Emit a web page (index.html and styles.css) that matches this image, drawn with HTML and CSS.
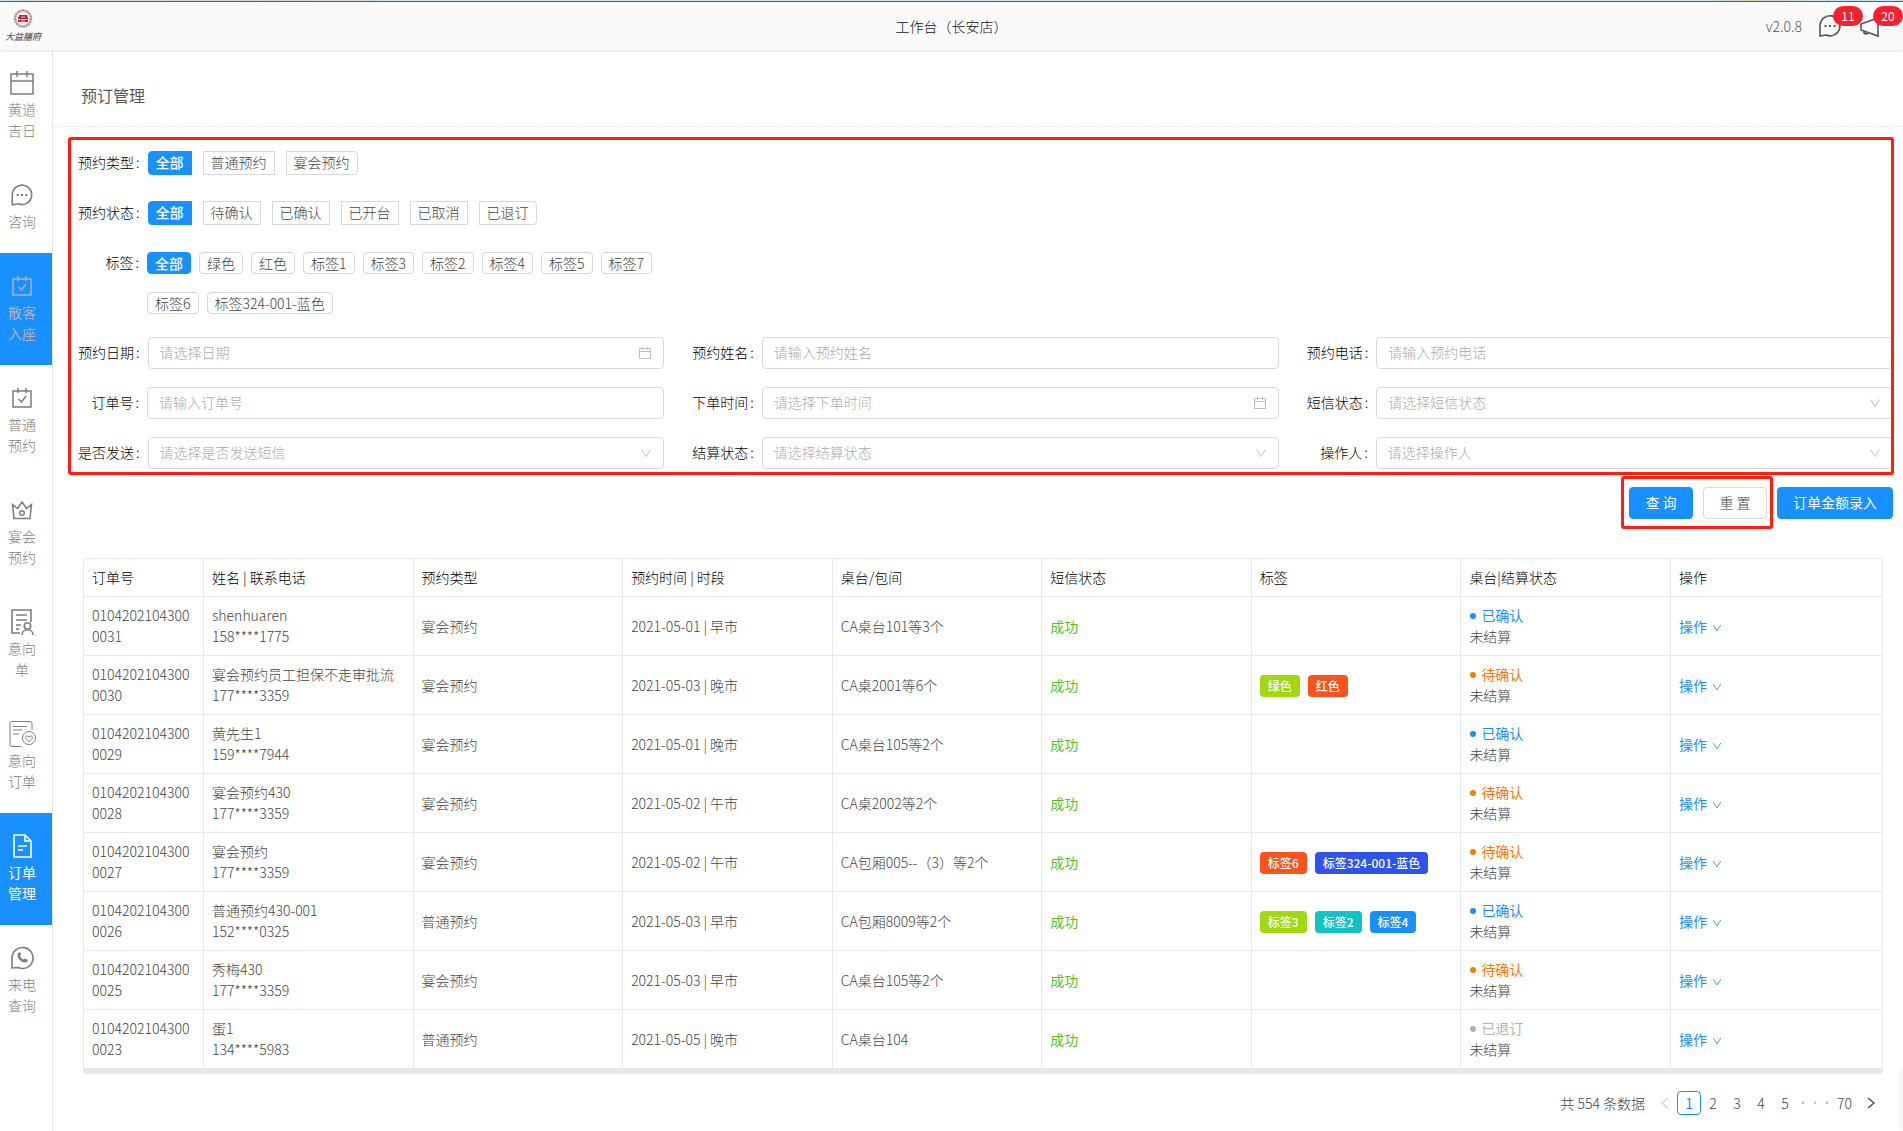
FILE: index.html
```html
<!DOCTYPE html>
<html lang="zh-CN">
<head>
    <meta charset="utf-8">
    <title>预订管理</title>
    <link rel="stylesheet" href="styles.css">
</head>
<body>
    <!-- shared icons -->
    <svg class="sprite" aria-hidden="true">
        <symbol id="i-down" viewBox="0 0 12 12"><path d="M1.5 2.5 6 9.5l4.500-7" fill="none" stroke="currentColor"/></symbol>
        <symbol id="i-date" viewBox="0 0 14 14"><path d="M1.500 2.500h11v10h-11zM1.500 5.500h11M4.500 1v3M9.500 1v3" fill="none" stroke="currentColor"/></symbol>
        <symbol id="i-check" viewBox="0 0 24 24"><path d="M3 5h18v16H3zM8 2v5M16 2v5M8.500 13l3 3 4.500-6" fill="none" stroke="currentColor" stroke-width="1.500"/></symbol>
        <symbol id="i-chat" viewBox="0 0 24 24"><path d="M2 22V12a10 10 0 1 1 6 9z" fill="none" stroke="currentColor" stroke-width="1.600"/><path d="M6.500 11h2v2h-2zM11 11h2v2h-2zM15.500 11h2v2h-2z" fill="currentColor"/></symbol>
    </svg>

    <div class="top-strip"></div>
    <header class="header">
        <a class="logo" href="#">
            <svg width="20" height="21" viewBox="0 0 20 21">
                <circle cx="10" cy="10.500" r="8" fill="#f6f1ee" stroke="#a8958b" stroke-width="2.500" stroke-dasharray="2 .6"/>
                <path d="M6 7h8v2h1v2H5V9h1zM5 12h10v2H5z" fill="#c8202f"/>
                <path d="M8 9h4M7 11.500h6M8 13h4" stroke="#fff" stroke-width=".7"/>
            </svg>
            <span class="logo-name">大益膳府</span>
        </a>
        <div class="header-title">工作台（长安店）</div>
        <div class="header-right">
            <span class="version">v2.0.8</span>
            <button class="notice" type="button" aria-label="消息">
                <svg width="24" height="24"><use href="#i-chat"/></svg>
                <span class="badge">11</span>
            </button>
            <button class="notice" type="button" aria-label="公告">
                <svg width="24" height="24" viewBox="0 0 24 24" fill="none" stroke="currentColor" stroke-width="1.600"><path d="M3 10v6l17 6V4L3 10zM6 17a2 2 0 1 0 4 1.500"/></svg>
                <span class="badge">20</span>
            </button>
        </div>
    </header>

    <div class="layout">
        <nav class="sidebar">
            <a href="#">
                <svg width="28" height="28" viewBox="0 0 28 28" fill="none" stroke="currentColor" stroke-width="1.500"><path d="M3 5h22v20H3zM3 12h22M9 2v6M19 2v6"/></svg>
                黄道吉日
            </a>
            <a href="#">
                <svg width="28" height="28" viewBox="0 0 24 24"><use href="#i-chat" x="2" y="2" width="20" height="20"/></svg>
                咨询
            </a>
            <a class="active dim" href="#">
                <svg width="28" height="28" viewBox="-2 -2 28 28"><use href="#i-check" width="24" height="24"/></svg>
                散客入座
            </a>
            <a href="#">
                <svg width="28" height="28" viewBox="-2 -2 28 28"><use href="#i-check" width="24" height="24"/></svg>
                普通预约
            </a>
            <a href="#">
                <svg width="28" height="28" viewBox="0 0 28 28" fill="none" stroke="currentColor" stroke-width="1.500"><path d="M4.500 8.500l5 4L14 6l4.500 6.500 5-4L22 22.500H6z"/><circle cx="14" cy="17" r="2.300"/></svg>
                宴会预约
            </a>
            <a href="#">
                <svg width="28" height="28" viewBox="0 0 28 28" fill="none" stroke="currentColor" stroke-width="1.600"><path d="M12 25H4V2h19v12M8 7h11M8 12h11M8 17h5M8 21h3"/><circle cx="19.500" cy="18" r="3.200"/><path d="M14 27c0-7 11-7 11 0"/></svg>
                意向单
            </a>
            <a href="#">
                <svg width="28" height="28" viewBox="0 0 28 28" fill="none" stroke="currentColor"><path d="M13 26.500H4a2 2 0 0 1-2-2v-21a2 2 0 0 1 2-2h18a2 2 0 0 1 2 2V10M5 6.500h14M5 10h9M5 14h6"/><circle cx="21" cy="18" r="6.500"/><path d="M21 21.500c-6-4-3-7 0-4.500 3-2.500 6 .5 0 4.500z"/></svg>
                意向订单
            </a>
            <a class="active" href="#">
                <svg width="28" height="28" viewBox="0 0 28 28" fill="none" stroke="currentColor" stroke-width="1.600"><path d="M6 3h11l6 6v16H6zM17 3v6h6M10 14h9M10 18h5"/></svg>
                订单管理
            </a>
            <a href="#">
                <svg width="28" height="28" viewBox="0 0 28 28" fill="none" stroke="currentColor" stroke-width="1.600"><path d="M4 24V14a10.500 10.500 0 1 1 6 9.500z"/><path d="M10 9c-2 5 4 11 9 9l1-2-3-1.500-1.500 1c-1.500-.5-3-2-3.500-3.500l1-1.500L12 8z" fill="currentColor" stroke="none"/></svg>
                来电查询
            </a>
        </nav>

        <main class="main">
            <h1 class="page-title">预订管理</h1>

            <form>
                <div class="filters">
                    <div class="field start" role="radiogroup" aria-labelledby="l-type">
                        <span class="label" id="l-type">预约类型</span>
                        <div class="options">
                            <label><input type="radio" name="type" checked><span>全部</span></label>
                            <label><input type="radio" name="type"><span>普通预约</span></label>
                            <label><input type="radio" name="type"><span>宴会预约</span></label>
                        </div>
                    </div>
                    <div class="field start" role="radiogroup" aria-labelledby="l-status">
                        <span class="label" id="l-status">预约状态</span>
                        <div class="options">
                            <label><input type="radio" name="status" checked><span>全部</span></label>
                            <label><input type="radio" name="status"><span>待确认</span></label>
                            <label><input type="radio" name="status"><span>已确认</span></label>
                            <label><input type="radio" name="status"><span>已开台</span></label>
                            <label><input type="radio" name="status"><span>已取消</span></label>
                            <label><input type="radio" name="status"><span>已退订</span></label>
                        </div>
                    </div>
                    <div class="field start" role="group" aria-labelledby="l-tag">
                        <span class="label" id="l-tag">标签</span>
                        <div class="options tags">
                            <label><input type="checkbox" checked><span>全部</span></label>
                            <label><input type="checkbox"><span>绿色</span></label>
                            <label><input type="checkbox"><span>红色</span></label>
                            <label><input type="checkbox"><span>标签1</span></label>
                            <label><input type="checkbox"><span>标签3</span></label>
                            <label><input type="checkbox"><span>标签2</span></label>
                            <label><input type="checkbox"><span>标签4</span></label>
                            <label><input type="checkbox"><span>标签5</span></label>
                            <label><input type="checkbox"><span>标签7</span></label>
                            <label><input type="checkbox"><span>标签6</span></label>
                            <label><input type="checkbox"><span>标签324-001-蓝色</span></label>
                        </div>
                    </div>

                    <div class="field start">
                        <label class="label" for="date">预约日期</label>
                        <div class="control"><input id="date" type="text" placeholder="请选择日期"><svg width="14" height="14"><use href="#i-date"/></svg></div>
                    </div>
                    <div class="field">
                        <label class="label" for="name">预约姓名</label>
                        <div class="control"><input id="name" type="text" placeholder="请输入预约姓名"></div>
                    </div>
                    <div class="field">
                        <label class="label" for="phone">预约电话</label>
                        <div class="control"><input id="phone" type="text" placeholder="请输入预约电话"></div>
                    </div>
                    <div class="field">
                        <label class="label" for="orderNo">订单号</label>
                        <div class="control"><input id="orderNo" type="text" placeholder="请输入订单号"></div>
                    </div>
                    <div class="field">
                        <label class="label" for="orderTime">下单时间</label>
                        <div class="control"><input id="orderTime" type="text" placeholder="请选择下单时间"><svg width="14" height="14"><use href="#i-date"/></svg></div>
                    </div>
                    <div class="field">
                        <label class="label" for="sms">短信状态</label>
                        <div class="control"><select id="sms"><option>请选择短信状态</option></select><svg width="12" height="12"><use href="#i-down"/></svg></div>
                    </div>
                    <div class="field">
                        <label class="label" for="sent">是否发送</label>
                        <div class="control"><select id="sent"><option>请选择是否发送短信</option></select><svg width="12" height="12"><use href="#i-down"/></svg></div>
                    </div>
                    <div class="field">
                        <label class="label" for="settle">结算状态</label>
                        <div class="control"><select id="settle"><option>请选择结算状态</option></select><svg width="12" height="12"><use href="#i-down"/></svg></div>
                    </div>
                    <div class="field">
                        <label class="label" for="operator">操作人</label>
                        <div class="control"><select id="operator"><option>请选择操作人</option></select><svg width="12" height="12"><use href="#i-down"/></svg></div>
                    </div>
                </div>

                <div class="actions">
                    <div class="marked">
                        <button class="btn primary" type="submit">查 询</button>
                        <button class="btn" type="reset">重 置</button>
                    </div>
                    <button class="btn primary" type="button">订单金额录入</button>
                </div>
            </form>

            <div class="table-wrap">
                <table>
                    <thead>
                        <tr>
                            <th class="col-no">订单号</th>
                            <th>姓名 | 联系电话</th>
                            <th>预约类型</th>
                            <th>预约时间 | 时段</th>
                            <th>桌台/包间</th>
                            <th>短信状态</th>
                            <th>标签</th>
                            <th>桌台|结算状态</th>
                            <th class="col-action">操作</th>
                        </tr>
                    </thead>
                    <tbody>
                        <tr>
                            <td>01042021043000031</td>
                            <td>shenhuaren<br>158****1775</td>
                            <td>宴会预约</td>
                            <td>2021-05-01 | 早市</td>
                            <td>CA桌台101等3个</td>
                            <td class="ok">成功</td>
                            <td></td>
                            <td><span class="state confirmed">已确认</span>未结算</td>
                            <td><a href="#">操作<svg width="10" height="10"><use href="#i-down"/></svg></a></td>
                        </tr>
                        <tr>
                            <td>01042021043000030</td>
                            <td>宴会预约员工担保不走审批流<br>177****3359</td>
                            <td>宴会预约</td>
                            <td>2021-05-03 | 晚市</td>
                            <td>CA桌2001等6个</td>
                            <td class="ok">成功</td>
                            <td><span class="tag lime">绿色</span><span class="tag red">红色</span></td>
                            <td><span class="state pending">待确认</span>未结算</td>
                            <td><a href="#">操作<svg width="10" height="10"><use href="#i-down"/></svg></a></td>
                        </tr>
                        <tr>
                            <td>01042021043000029</td>
                            <td>黄先生1<br>159****7944</td>
                            <td>宴会预约</td>
                            <td>2021-05-01 | 晚市</td>
                            <td>CA桌台105等2个</td>
                            <td class="ok">成功</td>
                            <td></td>
                            <td><span class="state confirmed">已确认</span>未结算</td>
                            <td><a href="#">操作<svg width="10" height="10"><use href="#i-down"/></svg></a></td>
                        </tr>
                        <tr>
                            <td>01042021043000028</td>
                            <td>宴会预约430<br>177****3359</td>
                            <td>宴会预约</td>
                            <td>2021-05-02 | 午市</td>
                            <td>CA桌2002等2个</td>
                            <td class="ok">成功</td>
                            <td></td>
                            <td><span class="state pending">待确认</span>未结算</td>
                            <td><a href="#">操作<svg width="10" height="10"><use href="#i-down"/></svg></a></td>
                        </tr>
                        <tr>
                            <td>01042021043000027</td>
                            <td>宴会预约<br>177****3359</td>
                            <td>宴会预约</td>
                            <td>2021-05-02 | 午市</td>
                            <td>CA包厢005--（3）等2个</td>
                            <td class="ok">成功</td>
                            <td><span class="tag red">标签6</span><span class="tag geek">标签324-001-蓝色</span></td>
                            <td><span class="state pending">待确认</span>未结算</td>
                            <td><a href="#">操作<svg width="10" height="10"><use href="#i-down"/></svg></a></td>
                        </tr>
                        <tr>
                            <td>01042021043000026</td>
                            <td>普通预约430-001<br>152****0325</td>
                            <td>普通预约</td>
                            <td>2021-05-03 | 早市</td>
                            <td>CA包厢8009等2个</td>
                            <td class="ok">成功</td>
                            <td><span class="tag lime">标签3</span><span class="tag cyan">标签2</span><span class="tag blue">标签4</span></td>
                            <td><span class="state confirmed">已确认</span>未结算</td>
                            <td><a href="#">操作<svg width="10" height="10"><use href="#i-down"/></svg></a></td>
                        </tr>
                        <tr>
                            <td>01042021043000025</td>
                            <td>秀梅430<br>177****3359</td>
                            <td>宴会预约</td>
                            <td>2021-05-03 | 早市</td>
                            <td>CA桌台105等2个</td>
                            <td class="ok">成功</td>
                            <td></td>
                            <td><span class="state pending">待确认</span>未结算</td>
                            <td><a href="#">操作<svg width="10" height="10"><use href="#i-down"/></svg></a></td>
                        </tr>
                        <tr>
                            <td>01042021043000023</td>
                            <td>蛋1<br>134****5983</td>
                            <td>普通预约</td>
                            <td>2021-05-05 | 晚市</td>
                            <td>CA桌台104</td>
                            <td class="ok">成功</td>
                            <td></td>
                            <td><span class="state refunded">已退订</span>未结算</td>
                            <td><a href="#">操作<svg width="10" height="10"><use href="#i-down"/></svg></a></td>
                        </tr>
                    </tbody>
                </table>
            </div>

            <nav class="pager">
                <span class="total">共 554 条数据</span>
                <a class="prev" href="#" aria-label="上一页"><svg width="12" height="12" viewBox="0 0 12 12"><path d="M9 1 3 6l6 5" fill="none" stroke="currentColor"/></svg></a>
                <a class="current" href="#">1</a>
                <a href="#">2</a>
                <a href="#">3</a>
                <a href="#">4</a>
                <a href="#">5</a>
                <span class="jump">•••</span>
                <a href="#">70</a>
                <a href="#" aria-label="下一页"><svg width="12" height="12" viewBox="0 0 12 12"><path d="M3 1l6 5-6 5" fill="none" stroke="currentColor" stroke-width="1.300"/></svg></a>
            </nav>
        </main>
    </div>
    <div class="side-tab"></div>
</body>
</html>
```
FILE: styles.css
```css
* {
    box-sizing: border-box;
}
body {
    margin: 0;
    min-height: 100vh;
    display: flex;
    flex-direction: column;
    font-family: "Noto Sans CJK SC", sans-serif;
    font-size: 14px;
    font-weight: 300;
    line-height: 21px;
    color: #444;
    background: #fff;
}
a {
    color: #1890ff;
    text-decoration: none;
}
button, input, select {
    font: inherit;
}
.sprite {
    position: absolute;
    width: 0;
    height: 0;
}

/* header */
.top-strip {
    height: 1px;
    background: linear-gradient(90deg, #cfe3f0, #e6d8cc 14%, #cfe3f0 20%, #cfe3f0 90%, #d8d9b8 92%, #cfe3f0 95%);
}
.header {
    position: relative;
    height: 49px;
    display: grid;
    grid-template-columns: 1fr auto 1fr;
    align-items: center;
    border-top: 1px solid #4c5f6b;
    background: #fafafa;
    box-shadow: 0 1px 2px rgba(0, 21, 41, 0.15);
}
.logo {
    width: 46px;
    display: flex;
    flex-direction: column;
    align-items: center;
    color: #6b584e;
}
.logo-name {
    font-size: 9px;
    font-weight: 500;
    font-style: italic;
    line-height: 16px;
}
.header-title {
    color: #111;
}
.header-right {
    display: flex;
    align-items: center;
    justify-content: flex-end;
    gap: 16px;
    padding-right: 21px;
}
.version {
    color: #555;
}
.notice {
    position: relative;
    display: flex;
    padding: 0;
    border: 0;
    background: none;
    color: #555;
}
.badge {
    position: absolute;
    top: -8px;
    left: 15px;
    width: 30px;
    height: 20px;
    border-radius: 10px;
    background: #f5222d;
    color: #fff;
    font-size: 12px;
    font-weight: 400;
    line-height: 20px;
    text-align: center;
}

/* left menu */
.layout {
    flex: 1;
    display: flex;
}
.sidebar {
    flex: 0 0 53px;
    border-right: 1px solid #e8e8e8;
}
.sidebar a {
    display: block;
    padding: 19px 15px 21px 7px;
    color: #7d7d7d;
    text-align: center;
}
.sidebar svg {
    display: block;
    margin: 0 auto 2px;
}
.sidebar .active {
    background: #1890ff;
    color: #fff;
    font-weight: 400;
}
.sidebar .dim {
    color: #b0b0b0;
}

.main {
    flex: 1;
    min-width: 0;
}
.page-title {
    margin: 0;
    padding: 33px 28px 19px;
    border-bottom: 1px dashed #e8e8e8;
    font-size: 16px;
    font-weight: 400;
    line-height: 24px;
    color: #595959;
}

/* filters */
.filters {
    position: relative;
    display: grid;
    grid-template-columns: repeat(3, 1fr);
    gap: 18px 28px;
    margin: 10px 9px 0 15px;
    padding: 10px 1px 6px 10px;
}
.filters::after,
.marked::after {
    content: "";
    position: absolute;
    border: 3px solid #ff1e10;
    border-radius: 3px;
    pointer-events: none;
}
.filters::after {
    inset: 0;
}
.field {
    display: flex;
    align-items: flex-start;
    min-width: 0;
}
.start {
    grid-column: 1;
}
.label {
    flex: 0 0 69px;
    line-height: 30px;
    text-align: right;
    white-space: nowrap;
    color: #000;
}
.label::after {
    content: ":";
    margin: 0 8px 0 2px;
}
.options {
    display: flex;
    flex-wrap: wrap;
    gap: 11px;
    padding: 4px 0;
}
.options input {
    position: absolute;
    opacity: 0;
}
.options span {
    display: block;
    height: 24px;
    padding: 0 7px;
    border: 1px solid #d9d9d9;
    line-height: 20px;
}
.options label:first-child span {
    border-radius: 4px 0 0 4px;
}
.options label:last-child span {
    border-radius: 0 4px 4px 0;
}
.options input:checked + span {
    border-color: #1890ff;
    background: #1890ff;
    color: #fff;
    font-weight: 500;
}
.options.tags {
    gap: 18px 8px;
    padding: 5px 0;
}
.options.tags label span {
    height: 22px;
    border-radius: 4px;
}
.control {
    position: relative;
    flex: 1;
    min-width: 0;
}
.control input,
.control select {
    display: block;
    width: 100%;
    height: 32px;
    padding: 3px 11px 5px;
    border: 1px solid #d9d9d9;
    border-radius: 4px;
    background: #fff;
    appearance: none;
}
.control select,
.control input::placeholder {
    color: #aaa;
    opacity: 1;
}
.control svg {
    position: absolute;
    top: 50%;
    right: 12px;
    transform: translateY(-50%);
    color: #bfbfbf;
    pointer-events: none;
}

.actions {
    display: flex;
    justify-content: flex-end;
    gap: 10px;
    margin: 12px 10px 0;
}
.marked {
    position: relative;
    display: flex;
    gap: 10px;
}
.marked::after {
    inset: -11px -6px -10px -8px;
}
.btn {
    height: 32px;
    min-width: 64px;
    padding: 0 15px 2px;
    border: 1px solid #d9d9d9;
    border-radius: 4px;
    background: #fff;
    color: #444;
    white-space: nowrap;
    cursor: pointer;
}
.btn.primary {
    border-color: #1890ff;
    background: #1890ff;
    color: #fff;
    font-weight: 400;
}

/* table */
.table-wrap {
    margin: 39px 20px 0 30px;
    border: solid #e8e8e8;
    border-width: 1px 0 5px 1px;
    border-radius: 4px;
}
table {
    width: 100%;
    table-layout: fixed;
    border-collapse: separate;
    border-spacing: 0;
}
th, td {
    padding: 8px;
    border: solid #e8e8e8;
    border-width: 0 1px 1px 0;
    text-align: left;
    word-break: break-all;
}
th {
    font-weight: 300;
    color: #000;
}
.col-no {
    width: 120px;
}
.col-action {
    width: 212px;
}
td a,
.ok,
.state {
    font-weight: 400;
}
.ok {
    color: #52c41a;
}
.state {
    display: flex;
    align-items: center;
}
.state::before {
    content: "";
    width: 6px;
    height: 6px;
    margin: 0 5px 0 1px;
    border-radius: 50%;
    background: currentColor;
}
.confirmed {
    color: #1890ff;
}
.pending {
    color: #ff7a00;
}
.refunded {
    color: #b3b3b3;
}
td svg {
    margin-left: 5px;
    vertical-align: -1px;
}
.tag {
    display: inline-block;
    margin-right: 8px;
    padding: 0 8px;
    border-radius: 4px;
    color: #fff;
    font-size: 12px;
    font-weight: 500;
    line-height: 22px;
    vertical-align: middle;
}
.lime {
    background: #a0d911;
}
.red {
    background: #fa541c;
}
.geek {
    background: #2f54eb;
}
.cyan {
    background: #13c2c2;
}
.blue {
    background: #1890ff;
}

/* pagination */
.pager {
    display: flex;
    justify-content: flex-end;
    margin: 17px 20px 16px;
    line-height: 24px;
}
.pager a {
    min-width: 24px;
    height: 24px;
    padding: 0 6px;
    border: 1px solid transparent;
    border-radius: 4px;
    line-height: 22px;
    text-align: center;
    color: #444;
}
.pager svg {
    display: block;
    height: 22px;
    margin: 0 -1px;
}
.pager .prev {
    color: #bfbfbf;
}
.pager .current {
    border-color: #1890ff;
    color: #1890ff;
    font-weight: 400;
}
.total {
    margin-right: 8px;
}
.jump {
    width: 33px;
    font-size: 12px;
    font-weight: 400;
    text-align: center;
    color: #bfbfbf;
}
.side-tab {
    position: fixed;
    right: 0;
    bottom: 0;
    width: 3px;
    height: 62px;
    border-radius: 4px 0 0 0;
    background: #f7f7f7;
    box-shadow: 0 0 3px rgba(0, 0, 0, 0.08);
}
```
